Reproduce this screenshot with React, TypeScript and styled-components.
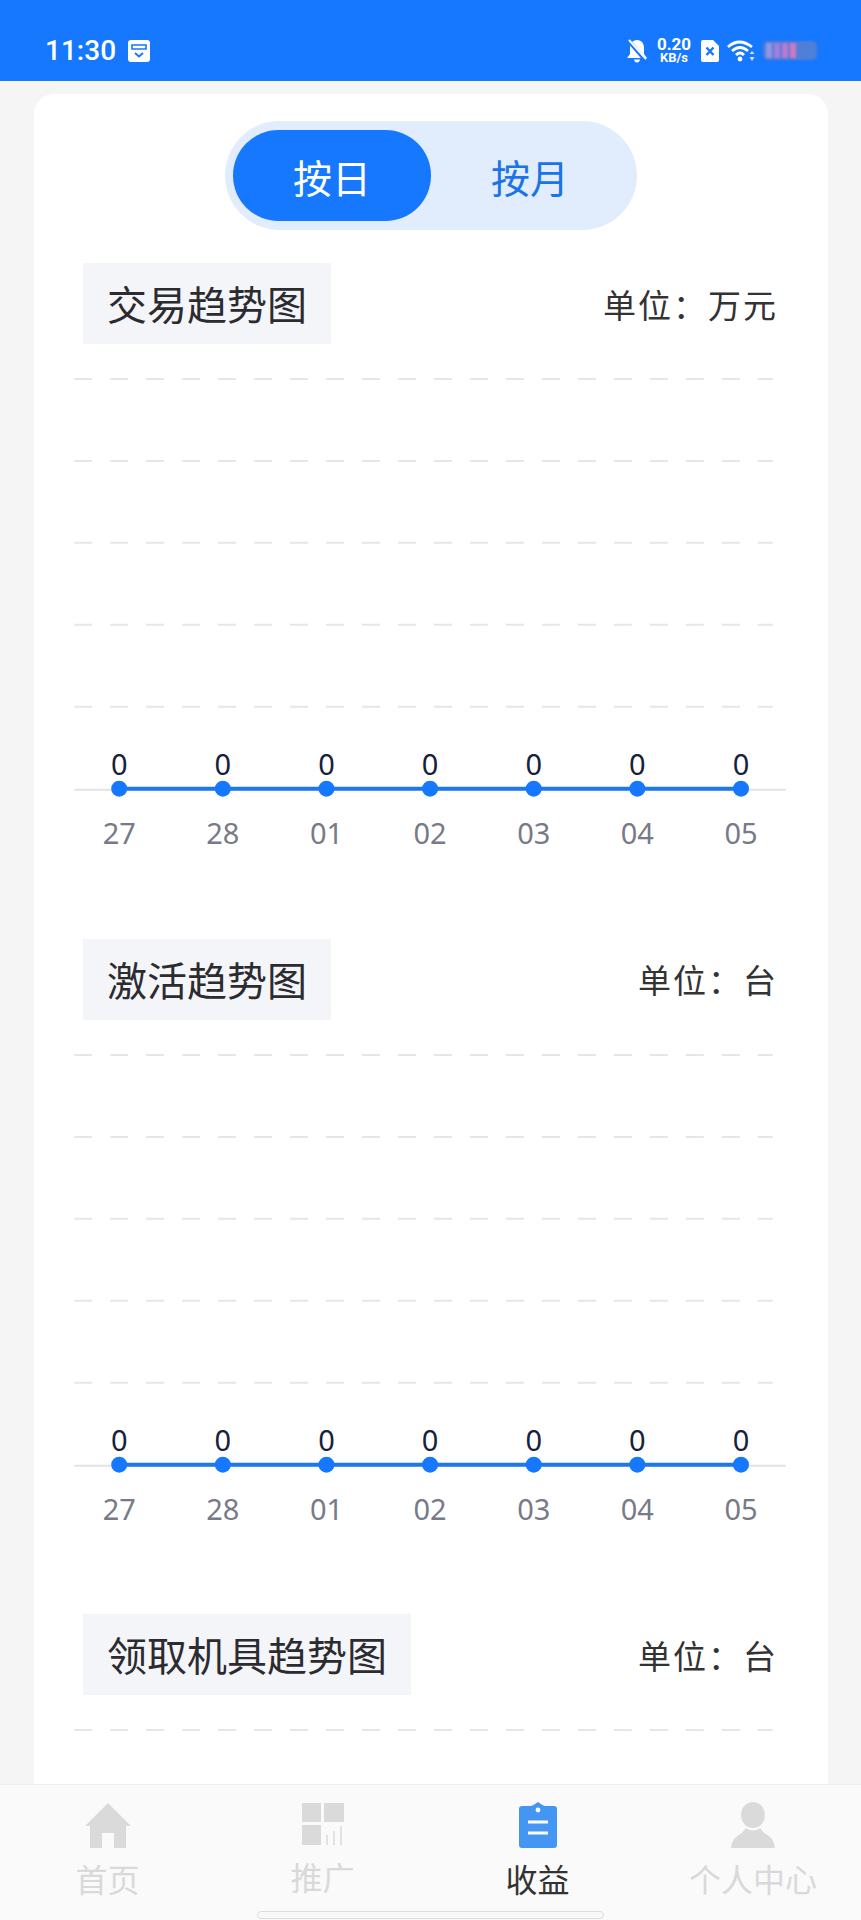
import React from 'react'
import styled, { createGlobalStyle } from 'styled-components'

const days = ['27', '28', '01', '02', '03', '04', '05']
const gridRows = [35, 117, 199, 281, 363]
const BASE_Y = 446

const charts = [
    { title: '交易趋势图', unit: '万元' },
    { title: '激活趋势图', unit: '台' },
    { title: '领取机具趋势图', unit: '台' },
]

const TrendChart: React.FC = () => (
    <ChartSvg viewBox="0 0 713 595">
        {gridRows.map(y => (
            <line key={y} x1="1" x2="700" y1={y} y2={y} stroke="#e6e6e8" strokeWidth="2" strokeDasharray="18 18" />
        ))}
        <line x1="1" x2="713" y1={BASE_Y} y2={BASE_Y} stroke="#e3e3e5" strokeWidth="2" />
        <line x1="46" x2="668" y1={BASE_Y - 1} y2={BASE_Y - 1} stroke="#1f78e8" strokeWidth="4" />
        {days.map((day, i) => {
            const x = 46 + i * 103.7
            return (
                <g key={day}>
                    <circle cx={x} cy={BASE_Y - 1} r="8" fill="#1677ff" />
                    <ValueLabel x={x} y={BASE_Y - 15} textAnchor="middle">0</ValueLabel>
                    <DayLabel x={x} y={BASE_Y + 54} textAnchor="middle">{day}</DayLabel>
                </g>
            )
        })}
    </ChartSvg>
)

const NavIcons: Record<string, React.ReactNode> = {
    home: (
        <svg width="46" height="46" viewBox="0 0 46 46">
            <path d="M23 1 46 24H41V46H29V31H17V46H5V24H0Z" fill="#dadada" />
        </svg>
    ),
    promote: (
        <svg width="42" height="44" viewBox="0 0 42 44">
            <path d="M0 1H19V20H0ZM22 1H42V20H22ZM0 23H19V43H0Z" fill="#dadada" />
            <path d="M25 33V43M32 29V43M39 24V43" stroke="#dadada" strokeWidth="1.5" />
        </svg>
    ),
    income: (
        <svg width="38" height="46" viewBox="0 0 38 46">
            <path d="M3 4H12Q15 3 19 0 23 3 26 4H35Q38 4 38 7V43Q38 46 35 46H3Q0 46 0 43V7Q0 4 3 4Z" fill="#4596f3" />
            <circle cx="19" cy="8" r="2.4" fill="#fff" />
            <path d="M9 20H29M9 31H29" stroke="#fff" strokeWidth="3" />
        </svg>
    ),
    profile: (
        <svg width="46" height="46" viewBox="0 0 46 46">
            <ellipse cx="23" cy="13" rx="12" ry="13" fill="#dadada" />
            <path d="M16 26Q23 31 30 26L34 31Q44 35 45 46H1Q2 35 12 31Z" fill="#dadada" />
        </svg>
    ),
}

const tabs = [
    { key: 'home', label: '首页' },
    { key: 'promote', label: '推广' },
    { key: 'income', label: '收益', active: true },
    { key: 'profile', label: '个人中心' },
]

export default function App() {
    return (
        <Screen>
            <GlobalStyle />
            <StatusBar>
                <StatusLeft>
                    <Clock>11:30</Clock>
                    <svg width="22" height="22" viewBox="0 0 22 22">
                        <rect width="22" height="22" rx="3" fill="#fff" />
                        <path d="M4 5H18V9H4Z" fill="none" stroke="#1677ff" strokeWidth="1.6" />
                        <path d="M7 13 11 16.5 15 13" fill="none" stroke="#1677ff" strokeWidth="2" />
                    </svg>
                </StatusLeft>
                <StatusRight>
                    <svg width="20" height="24" viewBox="0 0 20 24">
                        <path d="M10 1C5 1 3 5 3 9V15L0 19H20L17 15V9C17 5 15 1 10 1ZM7 20.5H13Q12.5 23.5 10 23.5T7 20.5Z" fill="#fff" />
                        <path d="M1 1 19 22" stroke="#1677ff" strokeWidth="4" />
                        <path d="M2 1 19 20" stroke="#fff" strokeWidth="2" />
                    </svg>
                    <NetSpeed>
                        <b>0.20</b>
                        <span>KB/s</span>
                    </NetSpeed>
                    <svg width="18" height="22" viewBox="0 0 18 22">
                        <path d="M2 0H12L18 6V20Q18 22 16 22H2Q0 22 0 20V2Q0 0 2 0Z" fill="#fff" />
                        <path d="M5.5 7.5 12.5 15M12.5 7.5 5.5 15" stroke="#1677ff" strokeWidth="2.4" />
                    </svg>
                    <svg width="28" height="22" viewBox="0 0 28 22">
                        <path d="M1 7Q12-3 25 7M5 11Q13 4 21 11M9 15Q13 11 17 15" fill="none" stroke="#fff" strokeWidth="2.8" />
                        <circle cx="13" cy="19" r="2.4" fill="#fff" />
                        <path d="M25 11 27.5 14H22.5ZM25 21 22.5 17H27.5Z" fill="#cfe2ff" />
                    </svg>
                    <Battery>
                        <BatteryCell $color="#9494e4" />
                        <BatteryCell $color="#a27fdc" />
                        <BatteryCell $color="#bb79d2" />
                        <BatteryCell $color="#d277c4" />
                    </Battery>
                </StatusRight>
            </StatusBar>

            <Content>
                <Card>
                    <Toggle>
                        <ToggleItem $active>按日</ToggleItem>
                        <ToggleItem>按月</ToggleItem>
                    </Toggle>
                    {charts.map(chart => (
                        <section key={chart.title}>
                            <ChartHeader>
                                <ChartTitle>{chart.title}</ChartTitle>
                                <ChartUnit>单位：{chart.unit}</ChartUnit>
                            </ChartHeader>
                            <TrendChart />
                        </section>
                    ))}
                </Card>
            </Content>

            <TabBar>
                {tabs.map(tab => (
                    <Tab key={tab.key}>
                        {NavIcons[tab.key]}
                        <TabLabel $active={tab.active}>{tab.label}</TabLabel>
                    </Tab>
                ))}
                <HomeHandle />
            </TabBar>
        </Screen>
    )
}

const GlobalStyle = createGlobalStyle`
    html, body {
        margin: 0;
        padding: 0;
        background: #f5f5f5;
    }
    body {
        font-family: "Noto Sans", "Noto Sans CJK SC", sans-serif;
    }
`

const Screen = styled.div`
    display: flex;
    flex-direction: column;
    width: 861px;
    height: 1920px;
    overflow: hidden;
    background: #f5f5f5;
`

const StatusBar = styled.header`
    flex: none;
    display: flex;
    justify-content: space-between;
    align-items: center;
    box-sizing: border-box;
    height: 81px;
    padding: 20px 44px 0 45px;
    background: #1677ff;
    color: #fff;
`

const StatusLeft = styled.div`
    display: flex;
    align-items: center;
    gap: 12px;
`

const Clock = styled.span`
    font-family: "Roboto", sans-serif;
    font-size: 28px;
    font-weight: 500;
`

const StatusRight = styled.div`
    display: flex;
    align-items: center;
    gap: 8px;
`

const NetSpeed = styled.div`
    display: flex;
    flex-direction: column;
    align-items: center;
    width: 38px;
    font-family: "Roboto", sans-serif;
    line-height: 14px;
    b {
        font-size: 17px;
        font-weight: 700;
    }
    span {
        font-size: 13px;
        font-weight: 700;
    }
`

const Battery = styled.div`
    display: flex;
    align-items: center;
    gap: 2px;
    box-sizing: border-box;
    width: 54px;
    height: 19px;
    padding: 2px 3px;
    border-radius: 5px;
    background: #4f7fd6;
    filter: blur(0.8px);
`

const BatteryCell = styled.i<{ $color: string }>`
    width: 6px;
    height: 15px;
    background: ${p => p.$color};
`

const Content = styled.main`
    flex: 1;
    min-height: 0;
    overflow: hidden;
    padding: 13px 33px 0 34px;
`

const Card = styled.div`
    padding-top: 27px;
    border-radius: 20px 20px 0 0;
    background: #fff;
`

const Toggle = styled.div`
    display: flex;
    box-sizing: border-box;
    width: 412px;
    height: 109px;
    margin: 0 auto 33px;
    padding: 9px 8px;
    border-radius: 55px;
    background: #e1ecfd;
`

const ToggleItem = styled.div<{ $active?: boolean }>`
    display: flex;
    justify-content: center;
    align-items: center;
    width: 198px;
    border-radius: 46px;
    font-size: 39px;
    color: ${p => (p.$active ? '#fff' : '#1a73e8')};
    background: ${p => (p.$active ? '#1677ff' : 'transparent')};
`

const ChartHeader = styled.div`
    display: flex;
    justify-content: space-between;
    align-items: center;
    padding: 0 50px 0 49px;
`

const ChartTitle = styled.h2`
    margin: 0;
    padding: 0 24px;
    height: 81px;
    line-height: 84px;
    background: #f4f5f9;
    color: #2b2b30;
    font-size: 40px;
    font-weight: 400;
`

const ChartUnit = styled.span`
    color: #333;
    font-size: 33px;
    letter-spacing: 2px;
`

const ChartSvg = styled.svg`
    display: block;
    width: 713px;
    height: 594.6px;
    margin-left: 39px;
`

const ValueLabel = styled.text`
    fill: #16213a;
    font-size: 29px;
`

const DayLabel = styled.text`
    fill: #777a88;
    font-size: 29px;
`

const TabBar = styled.nav`
    flex: none;
    position: relative;
    display: grid;
    grid-template-columns: 215px 215px 215px 216px;
    box-sizing: border-box;
    height: 136px;
    padding-top: 17px;
    border-top: 1px solid #eee;
    background: #fafafa;
`

const Tab = styled.div`
    display: flex;
    flex-direction: column;
    align-items: center;
    gap: 10px;
`

const TabLabel = styled.span<{ $active?: boolean }>`
    color: ${p => (p.$active ? '#333' : '#d9d9d9')};
    font-size: 32px;
    line-height: 44px;
`

const HomeHandle = styled.div`
    position: absolute;
    left: 257px;
    bottom: 1px;
    box-sizing: border-box;
    width: 347px;
    height: 8px;
    border: 1px solid #ddd;
    border-radius: 4px;
    background: #f8f8f8;
`
